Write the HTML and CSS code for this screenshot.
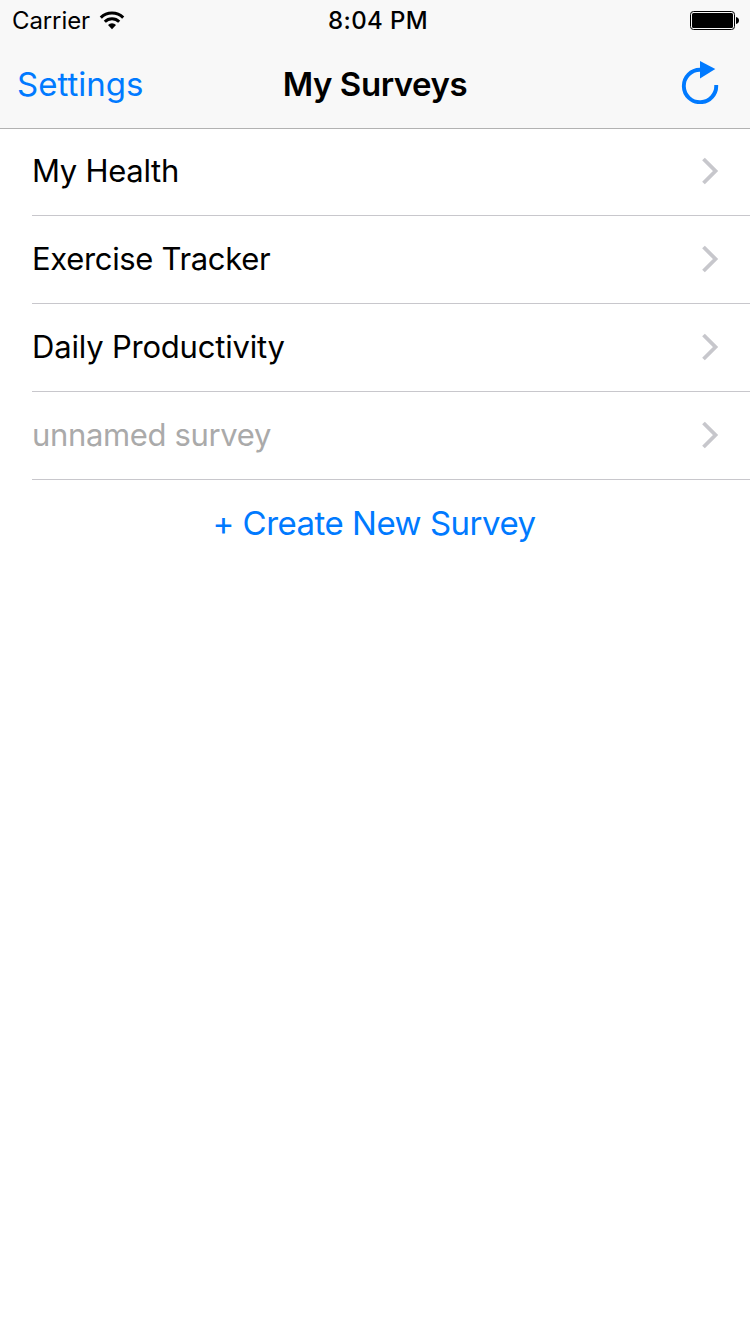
FILE: index.html
```html
<!DOCTYPE html>
<html lang="en">
<head>
<meta charset="utf-8">
<title>My Surveys</title>
<link rel="stylesheet" href="styles.css">
</head>
<body>
<header class="header">
  <div class="status">
    <div class="carrier"><span class="carrier-name">Carrier</span>
      <svg class="wifi" width="26" height="19" viewBox="0 0 26 19"><path d="M1.8 6.6a15.8 15.8 0 0 1 22.4 0M5.8 10.8a10.2 10.2 0 0 1 14.4 0" fill="none" stroke="#000" stroke-width="3"/><path d="M9 14a5.7 5.7 0 0 1 8 0l-4 4.2z"/></svg>
    </div>
    <span class="time">8:04 PM</span>
    <svg class="battery" width="50" height="20" viewBox="0 0 50 20"><rect x=".5" y="1.5" width="44" height="18" rx="3" fill="none" stroke="#000"/><rect x="2" y="3" width="41" height="15" rx="1.5"/><path d="M46 7q3 .8 3 3.5t-3 3.5z"/></svg>
  </div>
  <nav class="navbar">
    <a class="settings">Settings</a>
    <h1 class="title">My Surveys</h1>
    <svg class="refresh" width="40" height="44" viewBox="0 0 40 44"><path d="M20 9.8a16.2 16.2 0 1 0 16.2 15.2" fill="none" stroke="#007aff" stroke-width="3.9"/><path d="M20 1l15.3 8L20 18.6z" fill="#007aff"/></svg>
  </nav>
</header>
<main class="list">
  <div class="row"><span class="label health">My Health</span><svg class="chevron" width="18" height="28" viewBox="0 0 18 28"><path d="M2.5 2l12 12-12 12"/></svg></div>
  <div class="row"><span class="label exercise">Exercise Tracker</span><svg class="chevron" width="18" height="28" viewBox="0 0 18 28"><path d="M2.5 2l12 12-12 12"/></svg></div>
  <div class="row"><span class="label daily">Daily Productivity</span><svg class="chevron" width="18" height="28" viewBox="0 0 18 28"><path d="M2.5 2l12 12-12 12"/></svg></div>
  <div class="row"><span class="label unnamed">unnamed survey</span><svg class="chevron" width="18" height="28" viewBox="0 0 18 28"><path d="M2.5 2l12 12-12 12"/></svg></div>
</main>
<div class="create"><span class="create-label">+ Create New Survey</span></div>
</body>
</html>
```
FILE: styles.css
```css
* { box-sizing: border-box; }
body { margin: 0; background: #fff; color: #000; font-family: Inter, Roboto, sans-serif; }
.header { height: 129px; background: #f8f8f8; border-bottom: 1px solid #b2b2b2; }
.status { height: 40px; padding: 0 10px 0 12px; display: grid; grid-template-columns: 1fr auto 1fr; align-items: center; }
.carrier { display: flex; align-items: center; gap: 9.5px; }
.carrier-name { font-size: 24px; letter-spacing: -.1px; }
.time { font-size: 24px; font-weight: 500; letter-spacing: .35px; padding-left: 4px; }
.battery { justify-self: end; }
.navbar { height: 88px; padding: 0 30px 0 17px; display: grid; grid-template-columns: 1fr auto 1fr; align-items: center; }
.settings { color: #007aff; font-size: 33px; }
.title { margin: 0; padding-left: 13px; font-size: 33px; font-weight: 600; letter-spacing: -.45px; }
.refresh { justify-self: end; margin-bottom: 4px; }
.list { padding-left: 32px; }
.row { height: 88px; padding: 0 31px 2px 0; display: flex; align-items: center; justify-content: space-between; border-bottom: 1px solid #c8c7cc; }
.row:first-child { height: 87px; }
.label { font-size: 31px; padding-bottom: 1px; }
.health { letter-spacing: -.28px; }
.exercise { letter-spacing: -.33px; }
.daily { letter-spacing: -.2px; }
.unnamed { color: #aaa; letter-spacing: -.35px; }
.chevron path { fill: none; stroke: #c7c7cc; stroke-width: 3.8; }
.create { height: 88px; padding: 0 2px 2px 0; display: flex; align-items: center; justify-content: center; }
.create-label { color: #007aff; font-size: 33px; letter-spacing: -.5px; }
```
